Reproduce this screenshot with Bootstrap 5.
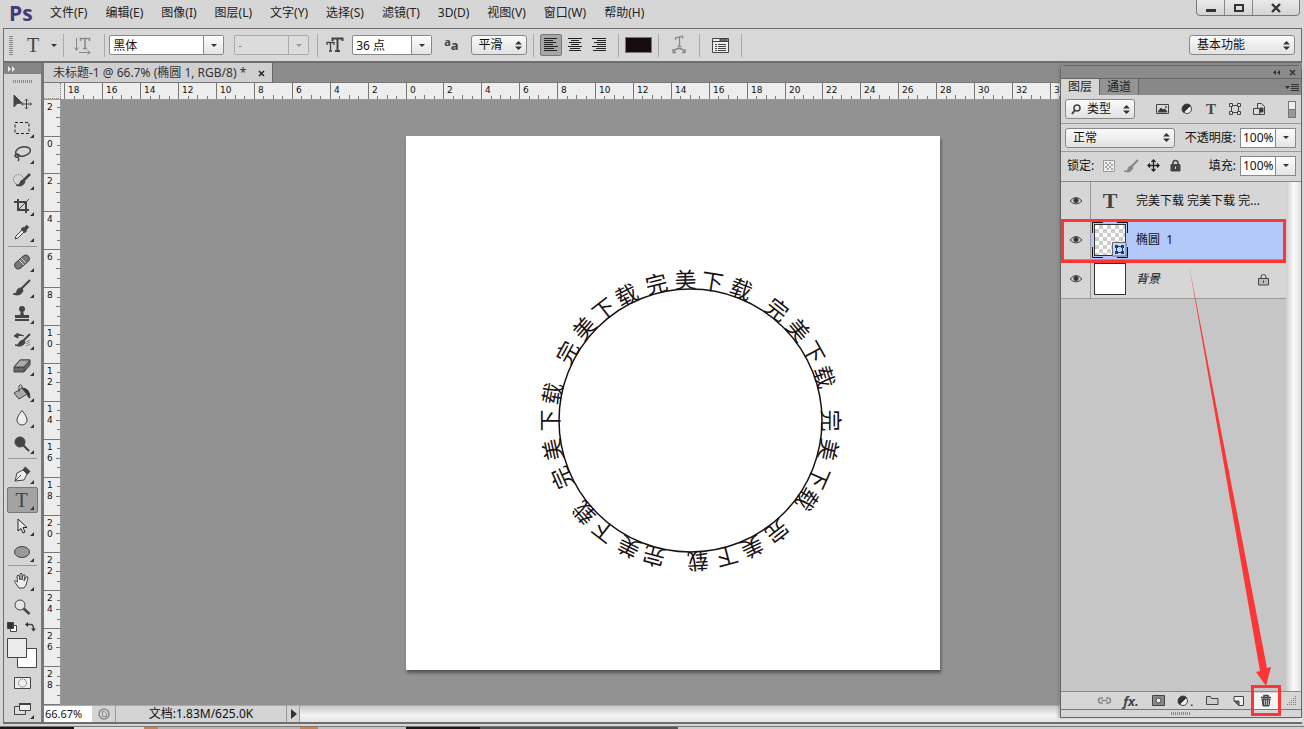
<!DOCTYPE html>
<html lang="zh-CN">
<head>
<meta charset="utf-8">
<meta name="viewport" content="width=device-width, initial-scale=1">
<title>未标题-1</title>
<link href="https://cdn.jsdelivr.net/npm/bootstrap@5.3.0/dist/css/bootstrap.min.css" rel="stylesheet">
<style>
:root { --ui:#d6d6d6; --line:#6e6e6e; --mark:#fc3537; }
body { font:12px/16px "Noto Sans","Noto Sans CJK SC",sans-serif; background:var(--ui); color:#111; overflow:hidden; }
button, select, input { font:inherit; color:inherit; }
svg { display:block; flex:none; }
.ic { fill:none; stroke:#444; stroke-width:1; }
.ic.soft { stroke:#888; }
.ic.dark { stroke:#222; }
.ic.bold { stroke-width:2; }
.min0 { min-height:0; }
.menubar { height:28px; padding-left:9px; }
.logo { font:bold 21px/24px "Open Sans",sans-serif; color:#43397f; width:41px; margin-top:-3px; }
.menubar nav { gap:18px; }
.menubar nav a { color:#222; text-decoration:none; white-space:nowrap; margin-top:-2px; }
.winctl { right:4px; top:-4px; border:1px solid #777; border-radius:0 0 4px 4px; height:20px; background:linear-gradient(#eee,#d4d4d4); }
.winctl button { border:0; border-right:1px solid #888; background:none; width:28px; padding:4px 0 0; display:flex; justify-content:center; align-items:center; }
.winctl button:last-child { border:0; width:46px; }
.options { height:35px; margin-left:3px; margin-right:2px; border:1px solid var(--line); border-width:1px 1px 2px 1px; padding:0 6px 0 5px; background:#d8d8d8; }
.vsep { width:1px; height:23px; background:#aaa; flex:none; margin:0 6px; }
.vsep.mid { margin:0 8px; }
.vsep.wide { margin:0 12px; }
.griplines { width:4px; height:19px; background:repeating-linear-gradient(#888 0 1px,transparent 1px 2px); flex:none; }
.flatbtn { border:0; background:none; padding:0; display:flex; align-items:center; justify-content:center; flex:none; position:relative; }
.combo { height:20px; border:1px solid #888; border-radius:2px; background:#fff; flex:none; display:flex; overflow:hidden; }
.combo input { border:0; background:none; min-width:0; flex:1; padding:0 0 0 3px; height:18px; outline:0; }
.combo button { border:0; border-left:1px solid #888; width:20px; padding:0; background:linear-gradient(#fdfdfd,#e4e4e4); display:flex; align-items:center; justify-content:center; }
.combo button::after, .caret::after { content:""; border:3px solid transparent; border-top-color:#333; border-bottom:0; }
.combo.off { background:#dcdcdc; border-color:#aaa; color:#888; }
.combo.off button { background:#dcdcdc; border-color:#aaa; }
.combo.off button::after { border-top-color:#999; }
.w-family { width:115px; } .w-style { width:75px; margin-left:10px; } .w-size { width:80px; margin-left:8px; }
.w-smooth { width:56px; } .w-space { width:106px; } .w-blend { width:110px; } .w-kind { width:70px; }
.picker { appearance:none; height:20px; border:1px solid #888; border-radius:3px; padding:0 14px 0 7px; line-height:18px; outline:0; flex:none;
  background:url("data:image/svg+xml,%3Csvg xmlns='http://www.w3.org/2000/svg' width='7' height='9'%3E%3Cpath d='M0 3.5L3.500 0L7 3.5zM0 5.5L3.5 9L7 5.5z' fill='%23333'/%3E%3C/svg%3E") no-repeat right 4px center, linear-gradient(#fafafa,#e2e2e2); }
.w-kind.picker { padding-left:21px; }
.kindicon { left:6px; top:5px; }
.smoothicon { margin:0 12px; color:#444; font-weight:bold; font-size:13px; }
.smoothicon span { font-size:11px; position:relative; top:-4px; }
.alignbtn { width:22px; height:22px; border:1px solid transparent; border-radius:2px; margin-right:2px; }
.alignbtn.on { background:#a6a6a6; border-color:#777; }
.swatch { width:27px; height:16px; background:#170c0d; border:1px solid #777; padding:0; flex:none; }
.glyphT { font-family:"Liberation Serif",serif; font-weight:bold; color:#444; font-size:15px; }
.glyphT.big { font-size:20px; font-weight:400; }
.glyphT.layerT { font-size:22px; width:38px; margin-right:7px; }
.typetool { margin:0 12px 0 14px; }
.work { min-height:0; margin-left:3px; margin-right:2px; border-left:1px solid var(--line); border-bottom:2px solid var(--line); }
.tools { width:40px; border-right:3px solid #777; background:#d5d5d5; flex:none; }
.tools header { height:11px; background:#868686; }
.tools .tgrip { height:15px; padding-top:6px; }
.tgrip i { display:block; width:20px; height:3px; margin:auto; background:repeating-linear-gradient(90deg,#888 0 1px,transparent 1px 2px); }
.tool { width:31px; height:26px; border:1px solid transparent; border-radius:2px; background:none; padding:0 2px 0 0; margin:0 3px; display:flex; align-items:center; justify-content:center; position:relative; }
.tool.more::after { content:""; position:absolute; right:3px; bottom:2px; border-style:solid; border-width:0 0 4px 4px; border-color:transparent transparent #333; }
.tool.on { background:#a3a3a3; border-color:#777; }
.tsep { height:3px; border-top:1px solid #999; margin:1px 4px 0; }
.tsep.tight { margin-top:0; }
.colors { width:36px; }
.doc { min-width:0; }
.tabs { height:20px; background:#8c8c8c; border-bottom:1px solid #777; flex:none; }
.doctab { background:#cfcfcf; border-right:1px solid #666; padding:1px 7px 0 9px; gap:12px; color:#333; }
.hruler { height:17px; background:#ededed; flex:none; border-bottom:1px solid #999; }
.corner { width:17px; background:#e0e0e0; border-right:1px dotted #888; border-bottom:1px dotted #888; flex:none; }
.vruler { width:17px; background:#ededed; flex:none; border-right:1px solid #999; }
.ruler { width:100%; height:100%; overflow:hidden; }
.ruler text { font:9px "DejaVu Sans",sans-serif; fill:#111; }
.ruler path { stroke:#777; fill:none; shape-rendering:crispEdges; }
.canvas { background:#929292; min-width:0; overflow:hidden; }
.sheet { width:534px; height:534px; background:#fff; box-shadow:1px 3px 3px #555; flex:none; }
.ring { font:22px "Noto Sans CJK SC",sans-serif; font-weight:400; fill:#1a1212; text-anchor:middle; }
.vscroll { width:18px; background:linear-gradient(90deg,#ddd,#f6f6f6); flex:none; }
.status { height:17px; background:#d4d4d4; border-top:1px solid #aaa; flex:none; }
.status input { width:48px; border:0; background:#fff; padding:0 0 0 1px; font-size:11px; }
.status .cell { border-left:1px solid #999; }
.cell.info { width:171px; } .cell.next { width:13px; } .export { width:23px; }
.hscroll { background:linear-gradient(#c8c8c8,#f4f4f4 60%,#e4e4e4); border-left:1px solid #999; }
.desk { height:5px; border-top:2px solid #d6d6d6; background:linear-gradient(90deg,#1b1718 74px,#ddd 74px 144px,#cf8247 144px 158px,#b8b5b3 158px 300px,#cf8247 300px 318px,#c5c5c5 318px 406px,#1c1717 406px 480px,#555 480px 678px,#d0d0d0 678px); flex:none; }
.desk::before { content:""; display:block; height:1px; background:#777; }
.panel { right:2px; top:65px; bottom:11px; width:242px; border:1px solid #666; border-radius:4px 4px 0 0; background:var(--ui); box-shadow:-2px 0 3px #7777; }
.ptitle { height:12px; background:#8b8b8b; border-radius:4px 4px 0 0; padding:0 5px; gap:8px; }
.ptabs { height:17px; background:#888; border-top:1px solid #666; }
.ptabs button { border:0; border-right:1px solid #666; background:#949494; width:39px; padding:0; color:#222; line-height:16px; }
.ptabs button.on { background:var(--ui); }
.ptabs button.pmenu { border:0; width:18px; background:none; }
.prow { height:28px; padding:0 5px 0 4px; flex:none; }
.prow.locks { height:30px; padding:0 5px 2px 6px; }
.prow + .prow { border-top:1px solid #999; }
.prow .combo { border-radius:0; width:56px; }
.prow .combo input { padding-left:2px; }
.prow .flatbtn { min-width:16px; }
.filters { gap:8px; padding-left:20px; }
.lockset { gap:6px; padding-left:7px; }
.prow .toggle { min-width:8px; }
.layers { min-height:0; border-top:1px solid #888; background:#c6c6c6; }
.layer { height:39px; background:var(--ui); border-bottom:1px solid #999; position:relative; }
.layer .eye { width:30px; height:38px; border-right:1px solid #999; }
.layer.on .pick { background:#b3c9f7; }
.thumb { width:32px; height:32px; border:1px solid #333; background:#fff; flex:none; position:relative; margin:0 10px 0 3px; }
.thumb svg { left:-3px; top:-3px; }
.checker { background:repeating-conic-gradient(#ccc 0 25%,#fff 0 50%) 0 0/8px 8px; }
.padlock { margin-right:17px; }
.marked::after { content:""; position:absolute; inset:-2px 0 -4px 0; border:3px solid var(--mark); pointer-events:none; z-index:2; }
.ptrack { width:15px; background:linear-gradient(90deg,#ccc,#fafafa 50%,#e0e0e0); flex:none; }
.pfoot { height:18px; border-top:1px solid #888; flex:none; padding-left:31px; padding-right:4px; }
.pfoot .flatbtn { width:24px; height:16px; margin-right:3px; }
.pfoot .fx { font:italic bold 13px/14px "Noto Sans",sans-serif; color:#444; }
.pfoot .trash { background:#f5f5f5; }
.trash::after { content:""; position:absolute; inset:-8px -3px -7px; border:3px solid var(--mark); }
.pgrip { height:8px; border-top:1px solid #777; padding-top:2px; flex:none; }
.arrow { left:128px; top:199px; width:90px; height:calc(100% - 230px); pointer-events:none; z-index:2; }
</style>
</head>
<body class="d-flex flex-column vh-100 position-relative">

<header class="menubar d-flex align-items-center flex-shrink-0">
  <div class="logo">Ps</div>
  <nav class="d-flex" aria-label="菜单">
    <a href="#">文件(F)</a><a href="#">编辑(E)</a><a href="#">图像(I)</a><a href="#">图层(L)</a><a href="#">文字(Y)</a><a href="#">选择(S)</a><a href="#">滤镜(T)</a><a href="#">3D(D)</a><a href="#">视图(V)</a><a href="#">窗口(W)</a><a href="#">帮助(H)</a>
  </nav>
  <div class="winctl position-absolute d-flex">
    <button aria-label="最小化"><svg width="12" height="8"><path d="M1 5h10v3H1z" fill="#333"/></svg></button>
    <button aria-label="最大化"><svg width="12" height="10"><path d="M2 2h8v6H2z" fill="none" stroke="#333" stroke-width="2"/></svg></button>
    <button aria-label="关闭"><svg width="12" height="10"><path d="M2 1l8 8M10 1L2 9" stroke="#333" stroke-width="2.4"/></svg></button>
  </div>
</header>

<div class="options d-flex align-items-center flex-shrink-0">
  <span class="griplines"></span>
  <button class="flatbtn typetool glyphT big" aria-label="文字工具">T</button>
  <span class="caret d-flex"></span>
  <span class="vsep"></span>
  <button class="flatbtn ms-1" aria-label="切换文本取向"><svg class="ic soft" width="18" height="20"><path d="M2.500 3v12M.5 12.500l2 3 2-3M5 17.500h11M13.500 15.500l3 2-3 2"/><path d="M6.500 6V3.500h9V6M11 3.500v10M9 13.500h4" stroke-width="1.500"/></svg></button>
  <span class="vsep wide me-1"></span>
  <div class="combo w-family"><input value="黑体" aria-label="字体"><button aria-label="选择字体"></button></div>
  <div class="combo off w-style"><input value="-" aria-label="字体样式" disabled><button aria-label="选择样式" disabled></button></div>
  <span class="vsep mid"></span>
  <svg class="ic bold" width="18" height="18"><path d="M1 9V6.500h7V9M4.500 7v8M3 15h3" stroke-width="1.300"/><path d="M6.500 5V2.500h10V5M11.500 3v12M9 15h5"/></svg>
  <div class="combo w-size"><input value="36 点" aria-label="字号"><button aria-label="选择字号"></button></div>
  <div class="smoothicon"><span>a</span>a</div>
  <select class="picker w-smooth" aria-label="消除锯齿"><option>平滑</option></select>
  <span class="vsep"></span>
  <button class="flatbtn alignbtn on" aria-label="左对齐"><svg class="ic dark" width="16" height="16"><path d="M1 1.500h13M1 3.500h9M1 5.500h12M1 7.500h9M1 9.500h14M1 11.500h10M1 13.500h13"/></svg></button>
  <button class="flatbtn alignbtn" aria-label="居中"><svg class="ic dark" width="16" height="16"><path d="M1 1.500h14M4 3.500h8M2 5.500h12M4 7.500h8M1 9.500h14M3 11.500h10M2 13.500h12"/></svg></button>
  <button class="flatbtn alignbtn" aria-label="右对齐"><svg class="ic dark" width="16" height="16"><path d="M1 1.500h14M6 3.500h9M3 5.500h12M6 7.500h9M1 9.500h14M5 11.500h10M2 13.500h13"/></svg></button>
  <span class="vsep"></span>
  <button class="swatch" aria-label="文本颜色"></button>
  <span class="vsep me-2"></span>
  <button class="flatbtn ms-1" aria-label="变形文字"><svg class="ic soft" width="16" height="20"><path d="M4.500 5V3l7-2v2.500M8.500 2v9M6.500 11.500h4M2 17.500q2-4 6-4t6 4M2 14v3.500h3M14 14v3.500h-3" stroke-width="1.300"/></svg></button>
  <span class="vsep wide"></span>
  <button class="flatbtn" aria-label="字符面板"><svg class="ic" width="17" height="17"><path d="M.5 1.500h16v14H.5z" fill="#eee"/><path d="M1 4.500h15M3 7.500h2M6 7.500h8M3 9.500h2M6 9.500h8M3 11.500h2M6 11.500h8M3 13.500h2M6 13.500h8"/><path d="M8 2h7v2H8z" fill="#888"/></svg></button>
  <span class="vsep wide"></span>
  <select class="picker w-space ms-auto" aria-label="工作区"><option>基本功能</option></select>
</div>

<main class="work d-flex flex-grow-1">
  <aside class="tools d-flex flex-column">
    <header><svg width="14" height="11"><path d="M4 3l3 3-3 3zM8 3l3 3-3 3z" fill="#eee"/></svg></header>
    <div class="tgrip"><i></i></div>
    <button class="tool" aria-label="移动"><svg class="ic" width="20" height="18"><path d="M2 2v12l3-3.500 5-.5z" fill="#444"/><path d="M14.500 6v10M9.500 11h10M13 7.500l1.500-1.500 1.500 1.500M13 14.500l1.500 1.500 1.500-1.500M11 9.500L9.500 11l1.500 1.500M18 9.500l1.500 1.500-1.500 1.500"/></svg></button>
    <button class="tool more" aria-label="矩形选框"><svg class="ic dark" width="18" height="16"><path d="M2 2.500h14v11H2z" stroke-dasharray="3 2"/></svg></button>
    <button class="tool more" aria-label="套索"><svg class="ic" width="20" height="18"><g stroke-width="1.500"><ellipse cx="11" cy="6.500" rx="7.500" ry="4.500" transform="rotate(-12 11 6.500)"/><path d="M4 9q-2 2 0 3t3-1-3-2M5 12q3 2 1 4"/></g></svg></button>
    <button class="tool more" aria-label="快速选择"><svg class="ic" width="20" height="18"><circle cx="6.500" cy="8.500" r="5" stroke-dasharray="1 1.500"/><path d="M18 3l-7 7" stroke-width="2.500"/><path d="M12 9q-4 0-4 3t-4 2q6 3 9-3z" fill="#444"/></svg></button>
    <button class="tool more" aria-label="裁剪"><svg class="ic bold" width="18" height="18"><path d="M5 2v11h11M1 5h12v11"/><path d="M5 13L16 2" stroke-width="1"/></svg></button>
    <button class="tool more" aria-label="吸管"><svg class="ic" width="18" height="18"><path d="M2 16l1-3 7-7 2 2-7 7z" fill="#eee"/><path d="M9 5l4 4M11 7l4-4" stroke-width="3.500"/></svg></button>
    <div class="tsep"></div>
    <button class="tool more" aria-label="污点修复"><svg class="ic" width="20" height="18"><rect x="1.500" y="5.500" width="17" height="7" rx="3.500" transform="rotate(-42 10 9)" fill="#777"/><path d="M7 7l5 5M9 5l5 5" stroke="#ccc"/></svg></button>
    <button class="tool more" aria-label="画笔"><svg class="ic" width="20" height="18"><path d="M18 1L9 10" stroke-width="2"/><path d="M10 9q-5 0-5 3t-4 3q7 3 10-3z" fill="#444"/></svg></button>
    <button class="tool more" aria-label="仿制图章"><svg width="18" height="18" fill="#444"><circle cx="9" cy="4" r="3"/><path d="M8 6h2l1 4h5v3H2v-3h5zM2 14h14v2H2z"/></svg></button>
    <button class="tool more" aria-label="历史记录画笔"><svg class="ic" width="20" height="18"><path d="M18 3l-7 7" stroke-width="2"/><path d="M12 9q-4 0-5 3t-4 2q6 3 10-2z" fill="#444"/><path d="M4 5q4-3 8 0M6 2L2 5l4 2z" fill="#444"/><path d="M15 10v5M17 9v5" stroke-dasharray="1 1"/></svg></button>
    <button class="tool more" aria-label="橡皮擦"><svg class="ic" width="20" height="18"><path d="M2 10l6-7h10l-6 7zM2 10v5h10l6-7V3" fill="#666"/><path d="M8 3h10l-6 7H2z" fill="#aaa"/><path d="M12 10v5"/></svg></button>
    <button class="tool more" aria-label="油漆桶"><svg class="ic" width="20" height="18"><path d="M2 10l8-5 5 6-8 5z" fill="#aaa"/><path d="M7 9V3q1.500-3 3 0v3"/><path d="M10 5q8 0 8 10-2 0-3-4z" fill="#333"/></svg></button>
    <button class="tool more" aria-label="模糊"><svg class="ic" width="16" height="18"><path d="M8 1.500q5 6 5 9.500a5 5 0 0 1-10 0Q3 7.500 8 1.500z" fill="#eee"/></svg></button>
    <button class="tool more" aria-label="减淡"><svg class="ic" width="18" height="18"><circle cx="7" cy="7" r="5" fill="#444"/><path d="M10 10l6 6" stroke-width="2"/></svg></button>
    <div class="tsep"></div>
    <button class="tool more" aria-label="钢笔"><svg class="ic" width="18" height="18"><path d="M2 16l2-8 6-3 4 4-3 6zM2 16l6-6" fill="#eee"/><path d="M11 3l5 5" stroke-width="4"/></svg></button>
    <button class="tool more on glyphT big" aria-label="横排文字">T</button>
    <button class="tool more" aria-label="路径选择"><svg class="ic dark" width="14" height="18"><path d="M3 2v12l3-2.500L8 16l2-1-2-4.500h4z" fill="#eee"/></svg></button>
    <button class="tool more" aria-label="椭圆"><svg class="ic" width="18" height="14"><ellipse cx="9" cy="7" rx="7.500" ry="5.500" fill="#999"/></svg></button>
    <div class="tsep tight"></div>
    <button class="tool more" aria-label="抓手"><svg class="ic" width="18" height="18"><path d="M6 16L1.500 9.500q0-2 3 .5L4 4q1-2 2 0l1 4V2q1-2 2 0v6l1-5q2-1 2 1l-1 5 2-4q2-1 2 1l-2 7-2 3z" fill="#eee"/></svg></button>
    <button class="tool" aria-label="缩放"><svg class="ic" width="18" height="18"><circle cx="7" cy="7" r="5" fill="#e6e6e6"/><path d="M10.500 10.500l6 5.500" stroke-width="2.500"/></svg></button>
    <button class="flatbtn colors" aria-label="前景色和背景色"><svg class="ic" width="36" height="50"><path d="M6.500 5.500h6v6h-6z" fill="#fff"/><path d="M3.500 2.500h6v6h-6z" fill="#333"/><path d="M23 4.500h4q2.500 0 2.500 5" stroke-width="1.500"/><path d="M24 2l-3 2.500L24 7zM27 8.500h5l-2.500 3z" fill="#333" stroke="none"/><path d="M13.500 28.500h19v19h-19z" fill="#fff"/><path d="M3.500 18.500h19v19h-19z" fill="#ececec"/></svg></button>
    <button class="tool" aria-label="快速蒙版"><svg class="ic" width="18" height="14"><path d="M1.500 1.500h16v11h-16z" fill="#eee"/><circle cx="9.500" cy="7" r="4" stroke-dasharray="1 1"/></svg></button>
    <button class="tool more" aria-label="屏幕模式"><svg class="ic" width="18" height="16"><path d="M1.500 5.500h11v8h-11z" fill="#ddd"/><path d="M6.500 2.500h11v7h-11z" fill="#eee"/><path d="M6 3h12" stroke-width="2"/></svg></button>
  </aside>

  <section class="doc d-flex flex-column flex-grow-1">
    <div class="tabs d-flex"><div class="doctab d-flex align-items-center"><span>未标题-1 @ 66.7% (椭圆 1, RGB/8) *</span><button class="flatbtn" aria-label="关闭文档"><svg width="7" height="7"><path d="M1 1l5 5M6 1L1 6" stroke="#222" stroke-width="1.500"/></svg></button></div></div>
    <div class="hruler d-flex"><div class="corner"></div><div class="flex-grow-1 overflow-hidden"><svg class="ruler" id="hr"></svg></div></div>
    <div class="d-flex flex-grow-1 min0">
      <div class="vruler"><svg class="ruler" id="vr"></svg></div>
      <div class="canvas d-flex flex-grow-1 align-items-center justify-content-center" id="canvas">
        <svg class="sheet" id="sheet" viewBox="0 0 534 534"><circle cx="284.500" cy="284.500" r="131.500" fill="none" stroke="#1a1212" stroke-width="1.500"/><g class="ring" id="ring"></g></svg>
      </div>
      <div class="vscroll"></div>
    </div>
    <div class="status d-flex align-items-stretch">
      <input value="66.67%" aria-label="缩放比例">
      <button class="flatbtn export" aria-label="导出"><svg class="ic soft" width="12" height="12"><circle cx="6" cy="6" r="5" stroke-width="1.500"/><path d="M4.500 3.500h2l2 2v3h-4z"/></svg></button>
      <span class="cell info text-center">文档:1.83M/625.0K</span>
      <button class="flatbtn cell next" aria-label="状态菜单"><svg width="7" height="10"><path d="M1 0l6 5-6 5z" fill="#333"/></svg></button>
      <div class="hscroll flex-grow-1"></div>
    </div>
  </section>
</main>
<div class="desk"></div>

<aside class="panel position-absolute d-flex flex-column">
  <div class="ptitle d-flex align-items-center justify-content-end flex-shrink-0">
    <svg width="9" height="7"><path d="M4 1v5L1 3.500zM8 1v5L5 3.500z" fill="#333"/></svg>
    <svg width="7" height="7"><path d="M1 1l5 5M6 1L1 6" stroke="#333" stroke-width="1.500"/></svg>
  </div>
  <div class="ptabs d-flex flex-shrink-0"><button class="on">图层</button><button>通道</button>
    <button class="flatbtn pmenu ms-auto" aria-label="面板菜单"><svg width="14" height="9"><path d="M0 3h5L2.500 6zM6 1h8v1H6zM6 3h8v1H6zM6 5h8v1H6zM6 7h8v1H6z" fill="#333"/></svg></button></div>
  <div class="prow d-flex align-items-center">
    <div class="position-relative"><select class="picker w-kind" aria-label="筛选"><option>类型</option></select>
      <svg class="ic kindicon position-absolute" width="11" height="11"><circle cx="6" cy="4" r="3" stroke-width="1.500"/><path d="M4 6L1 10" stroke-width="2"/></svg></div>
    <div class="filters d-flex flex-grow-1">
      <button class="flatbtn" aria-label="像素"><svg class="ic" width="14" height="12"><path d="M.5 1.500h12v9H.5z"/><path d="M2 9l3-4 2 2 2-1 2 3z" fill="#333"/><circle cx="10" cy="4" r=".6"/></svg></button>
      <button class="flatbtn" aria-label="调整"><svg class="ic" width="12" height="12"><circle cx="6" cy="6" r="4.500" fill="#eee"/><path d="M2.500 9.500a4.500 4.500 0 0 1 7-7z" fill="#333"/></svg></button>
      <button class="flatbtn glyphT" aria-label="文字">T</button>
      <button class="flatbtn" aria-label="形状"><svg class="ic" width="12" height="12"><path d="M2.500 2.500h7v7h-7z"/><path d="M.5.5h3v3h-3zM8.500.5h3v3h-3zM.5 8.500h3v3h-3zM8.500 8.500h3v3h-3z" fill="#ddd"/></svg></button>
      <button class="flatbtn" aria-label="智能对象"><svg class="ic" width="12" height="13"><path d="M4.500.5h4l3 3v8h-7z"/><path d="M.5 5.500h6v6h-6z" fill="#ddd"/><path d="M7 5h3v4H7z" fill="#333"/></svg></button>
    </div>
    <button class="flatbtn toggle" aria-label="筛选开关"><svg width="8" height="17"><path d="M0 0h8v17H0z" fill="#777"/><path d="M1 1h6v7H1z" fill="#eee"/><path d="M1 9h6v7H1z" fill="#999"/></svg></button>
  </div>
  <div class="prow d-flex align-items-center">
    <select class="picker w-blend me-auto" aria-label="混合模式"><option>正常</option></select>
    <label for="op" class="me-1">不透明度:</label><div class="combo"><input id="op" value="100%"><button aria-label="不透明度"></button></div>
  </div>
  <div class="prow locks d-flex align-items-center">
    <span>锁定:</span>
    <div class="lockset d-flex flex-grow-1">
      <button class="flatbtn" aria-label="锁定透明像素"><svg width="12" height="12"><path d="M.5.5h11v11H.5z" fill="#eee" stroke="#999"/><path d="M2 2h2v2H2zM6 2h2v2H6zM4 4h2v2H4zM8 4h2v2H8zM2 6h2v2H2zM6 6h2v2H6zM4 8h2v2H4zM8 8h2v2H8z" fill="#aaa"/></svg></button>
      <button class="flatbtn" aria-label="锁定图像像素"><svg class="ic soft" width="16" height="14"><path d="M15 1L8 8" stroke-width="2"/><path d="M9 7q-4 0-4 3t-4 2q6 3 9-3z" fill="#888"/></svg></button>
      <button class="flatbtn" aria-label="锁定位置"><svg class="ic dark" width="13" height="13"><path d="M6.500 1v11M1 6.500h11M4.500 3l2-2 2 2M4.500 10l2 2 2-2M3 4.500l-2 2 2 2M10 4.500l2 2-2 2" stroke-width="1.300"/></svg></button>
      <button class="flatbtn" aria-label="锁定全部"><svg class="ic" width="11" height="13"><path d="M3 6V4q0-2.500 2.500-2.500T8 4v2" stroke-width="1.500"/><path d="M1 5.500h9V12H1z" fill="#444"/><path d="M5.500 7.500v2.500" stroke="#ddd"/></svg></button>
    </div>
    <label for="fl" class="me-1">填充:</label><div class="combo"><input id="fl" value="100%"><button aria-label="填充"></button></div>
  </div>
  <div class="layers d-flex flex-grow-1">
    <div class="flex-grow-1">
      <div class="layer d-flex">
        <button class="flatbtn eye" aria-label="显示"><svg class="ic" width="14" height="10"><path d="M1 5q6-7 12 0-6 6-12 0z"/><circle cx="7" cy="4.500" r="2.200" fill="#333"/></svg></button>
        <div class="pick d-flex align-items-center flex-grow-1"><span class="glyphT layerT text-center">T</span><span>完美下载 完美下载 完...</span></div>
      </div>
      <div class="layer on marked d-flex">
        <button class="flatbtn eye" aria-label="显示"><svg class="ic" width="14" height="10"><path d="M1 5q6-7 12 0-6 6-12 0z"/><circle cx="7" cy="4.500" r="2.200" fill="#333"/></svg></button>
        <div class="pick d-flex align-items-center flex-grow-1"><div class="checker thumb"><svg class="position-absolute" width="36" height="36"><path d="M.5 11V.5H11M25 .5h10.500V11M.5 25v10.500H11M25 35.500h10.500V25" fill="none" stroke="#111"/><path d="M20.500 20.500H34V34H20.500z" fill="#c6d6f8" stroke="#666"/><path d="M24.500 24.500h6v6h-6z" fill="none" stroke="#1f3d70"/><path d="M23 23h3v3h-3zM29 23h3v3h-3zM23 29h3v3h-3zM29 29h3v3h-3z" fill="#1f3d70"/></svg></div><span>椭圆&nbsp; 1</span></div>
      </div>
      <div class="layer d-flex">
        <button class="flatbtn eye" aria-label="显示"><svg class="ic" width="14" height="10"><path d="M1 5q6-7 12 0-6 6-12 0z"/><circle cx="7" cy="4.500" r="2.200" fill="#333"/></svg></button>
        <div class="pick d-flex align-items-center flex-grow-1"><div class="thumb"></div><em>背景</em><svg class="ic padlock ms-auto" width="11" height="13"><path d="M3 6V4q0-2.500 2.500-2.500T8 4v2"/><path d="M.5 5.500h10V12H.5z" fill="#bbb"/><path d="M5.500 7.500v2.500"/></svg></div>
      </div>
    </div>
    <div class="ptrack"></div>
  </div>
  <div class="pfoot d-flex align-items-center">
    <button class="flatbtn" aria-label="链接图层"><svg class="ic soft" width="15" height="9"><path d="M6 7H4a2.500 2.500 0 0 1 0-5h2M9 7h2a2.500 2.500 0 0 0 0-5H9M4.500 4.500h6" stroke-width="1.500"/></svg></button>
    <button class="flatbtn fx" aria-label="图层样式">fx.</button>
    <button class="flatbtn" aria-label="图层蒙版"><svg class="ic" width="13" height="11"><path d="M.5.500h12v10H.5z" fill="#888"/><circle cx="6.500" cy="5.500" r="2.500" fill="#eee"/></svg></button>
    <button class="flatbtn" aria-label="调整图层"><svg class="ic" width="16" height="12"><circle cx="6" cy="6" r="4.500" fill="#eee"/><path d="M2.500 9.500a4.500 4.500 0 0 1 7-7z" fill="#333"/><path d="M14 9.500h1.500v1.500H14z" fill="#333" stroke="none"/></svg></button>
    <button class="flatbtn" aria-label="新建组"><svg class="ic" width="13" height="11"><path d="M.5 9.500v-8h4l1 2h6.500v6z" fill="#ccc"/></svg></button>
    <button class="flatbtn" aria-label="新建图层"><svg class="ic" width="12" height="12"><path d="M1 1.500h9.500v9H6L1 6z" fill="#eee"/><path d="M1 6h5v4.500z" fill="#666"/></svg></button>
    <button class="flatbtn trash" aria-label="删除图层"><svg class="ic" width="12" height="13"><path d="M1 3.500h10M4 3V1.500h4V3" stroke-width="1.500"/><path d="M2 5h8l-1 7H3z" fill="#555"/><path d="M4.500 6v5M6.500 6v5M8.500 6v5" stroke="#ddd" stroke-width=".7"/></svg></button>
    <svg class="ms-auto" width="10" height="10" fill="#777"><path d="M8 0h1v1H8zM6 2h1v1H6zM8 2h1v1H8zM4 4h1v1H4zM6 4h1v1H6zM8 4h1v1H8zM2 6h1v1H2zM4 6h1v1H4zM6 6h1v1H6zM8 6h1v1H8zM0 8h1v1H0zM2 8h1v1H2zM4 8h1v1H4zM6 8h1v1H6zM8 8h1v1H8z"/></svg>
  </div>
  <div class="pgrip tgrip"><i></i></div>
  <svg class="arrow position-absolute" viewBox="0 0 90 421" preserveAspectRatio="none"><path d="M0 0L78 403l4-1-5 19-10-14 4-1z" fill="#fc3537"/></svg>
</aside>

<script src="https://cdn.jsdelivr.net/npm/bootstrap@5.3.0/dist/js/bootstrap.bundle.min.js"></script>
<script>
const UNIT = 18.95; // pixels per ruler centimetre at 66.7% zoom
function drawRuler(svg, origin, vertical) {
  const len = vertical ? svg.clientHeight : svg.clientWidth;
  let d = '', t = '';
  for (let q = Math.ceil(-origin / UNIT * 2); origin + q * UNIT / 2 < len; q++) {
    const p = Math.round(origin + q * UNIT / 2) + .5;
    const major = q % 4 === 0, h = major ? 17 : q % 2 === 0 ? 5 : 4;
    d += vertical ? `M17 ${p}h${-h}` : `M${p} 17v${-h}`;
    if (!major || p + 24 > len) continue;
    const n = String(Math.abs(q / 2));
    if (vertical) [...n].forEach((c, i) => { t += `<text x="3" y="${p + 10.5 + i * 11}">${c}</text>`; });
    else t += `<text x="${p + 3.5}" y="10">${n}</text>`;
  }
  if (vertical) t += `<text x="3" y="10">2</text>`;
  svg.innerHTML = `<path d="${d}"/>${t}`;
}
function layout() {
  const c = document.getElementById('canvas').getBoundingClientRect();
  const s = document.getElementById('sheet').getBoundingClientRect();
  drawRuler(document.getElementById('hr'), s.left - c.left, false);
  drawRuler(document.getElementById('vr'), s.top - c.top, true);
}
// Angle in degrees, clockwise from the top, of each character on the path
const angles = [-14,-2,9,21,38,50,61,72,90,102,114,124,142,154,165,177,195,206,218,229,246,258,270,281,299,311,322,333];
document.getElementById('ring').innerHTML = angles.map((a, i) =>
  `<text x="284.5" y="152" transform="rotate(${a} 284.5 284.5)">${'完美下载'[i % 4]}</text>`).join('');
layout();
addEventListener('resize', layout);
</script>
</body>
</html>
